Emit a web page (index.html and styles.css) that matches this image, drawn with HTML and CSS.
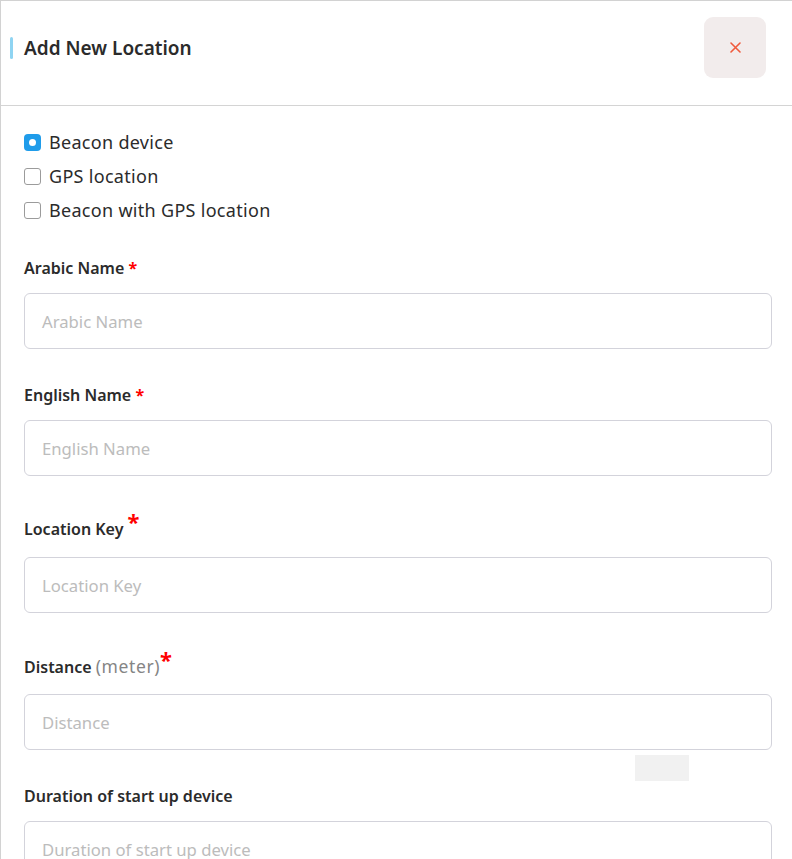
FILE: index.html
```html
<!DOCTYPE html>
<html lang="en">
<head>
<meta charset="utf-8">
<title>Add New Location</title>
<link rel="stylesheet" href="styles.css">
</head>
<body>
<div class="modal">
  <header class="modal-header">
    <h1 class="title">Add New Location</h1>
    <button class="close" type="button" aria-label="Close">
      <svg width="11" height="11" viewBox="0 0 11 11"><path d="M1 1L10 10M10 1L1 10" stroke="#f05a3c" stroke-width="1.6" stroke-linecap="round"/></svg>
    </button>
  </header>
  <div class="modal-body">
    <div class="options">
      <label class="option"><span class="box checked"></span>Beacon device</label>
      <label class="option"><span class="box"></span>GPS location</label>
      <label class="option"><span class="box"></span>Beacon with GPS location</label>
    </div>

    <div class="field">
      <div class="label">Arabic Name <span class="req">*</span></div>
      <div class="input">Arabic Name</div>
    </div>
    <div class="field">
      <div class="label">English Name <span class="req">*</span></div>
      <div class="input">English Name</div>
    </div>
    <div class="field">
      <div class="label tall">Location Key <span class="req big">*</span></div>
      <div class="input">Location Key</div>
    </div>
    <div class="field">
      <div class="label tall">Distance <span class="unit">(meter)</span><span class="req big">*</span></div>
      <div class="input">Distance</div>
    </div>
    <div class="field">
      <div class="label">Duration of start up device</div>
      <div class="input">Duration of start up device</div>
    </div>
  </div>
  <div class="ghost"></div>
</div>
</body>
</html>
```
FILE: styles.css
```css
html, body {
  margin: 0;
  padding: 0;
  background: #ffffff;
}
body {
  font-family: "Noto Sans", "Liberation Sans", sans-serif;
  color: #2b2b2b;
}
.modal {
  position: relative;
  width: 792px;
  height: 859px;
  box-sizing: border-box;
  border-top: 1px solid #d2d2d2;
  border-left: 1px solid #d2d2d2;
  overflow: hidden;
}
.modal-header {
  height: 105px;
  box-sizing: border-box;
  border-bottom: 1px solid #d4d4d4;
  display: flex;
  align-items: flex-start;
  justify-content: space-between;
  padding: 16px 26px 0 23px;
  position: relative;
}
.modal-header::before {
  content: "";
  position: absolute;
  left: 9px;
  top: 36px;
  width: 3px;
  height: 22px;
  border-radius: 2px;
  background: #8fd4f2;
}
.title {
  margin: 19px 0 0;
  font-size: 19px;
  line-height: 24px;
  font-weight: 600;
  color: #2b2b2b;
}
.close {
  width: 62px;
  height: 61px;
  border: 0;
  border-radius: 9px;
  background: #f2ecec;
  display: flex;
  align-items: center;
  justify-content: center;
  padding: 0;
  cursor: pointer;
}
.modal-body {
  padding: 19px 20px 0 23px;
}
.options {
  display: flex;
  flex-direction: column;
}
.option {
  display: flex;
  align-items: center;
  gap: 8px;
  height: 34px;
  font-size: 18px;
  letter-spacing: 0.3px;
  color: #2b2b2b;
}
.box {
  width: 17px;
  height: 17px;
  box-sizing: border-box;
  border: 1px solid #9b9b9b;
  border-radius: 3px;
  background: #fff;
  position: relative;
  flex: none;
}
.box.checked {
  border: 0;
  border-radius: 4px;
  background: #1f9cea;
}
.box.checked::after {
  content: "";
  position: absolute;
  left: 5px;
  top: 5px;
  width: 7px;
  height: 7px;
  border-radius: 50%;
  background: #fff;
}
.field {
  margin-top: 31px;
  display: flex;
  flex-direction: column;
  gap: 15px;
}
.field + .field {
  margin-top: 36px;
}
.label {
  font-size: 16px;
  line-height: 20px;
  font-weight: 600;
  color: #2b2b2b;
}
.label.tall {
  padding-top: 7px;
  line-height: 20px;
  height: 23px;
}
.req {
  color: #ff0000;
  font-weight: 700;
}
.req.big {
  font-size: 22px;
  position: relative;
  top: -5px;
  line-height: 0;
}
.unit {
  font-weight: 400;
  font-size: 17.5px;
  letter-spacing: 0.6px;
  color: #858585;
}
.input {
  height: 56px;
  box-sizing: border-box;
  border: 1px solid #d3d3db;
  border-radius: 6px;
  padding: 0 17px;
  display: flex;
  align-items: center;
  font-size: 16.7px;
  color: #bcbcbc;
}
.ghost {
  position: absolute;
  left: 634px;
  top: 754px;
  width: 54px;
  height: 26px;
  background: #f1f1f1;
}
```
